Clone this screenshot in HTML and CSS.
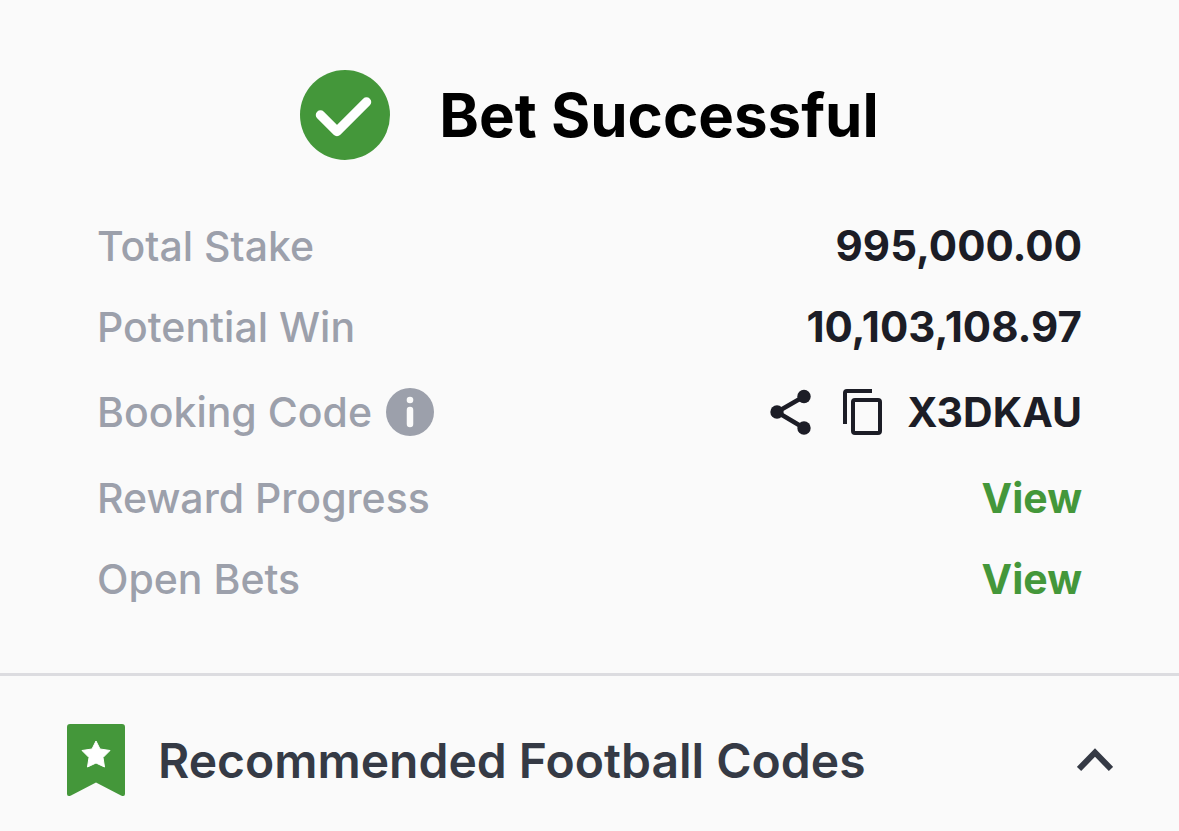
FILE: index.html
```html
<!DOCTYPE html>
<html lang="en">

<head>
    <meta charset="UTF-8">
    <meta name="viewport" content="width=device-width, initial-scale=1.0">
    <title>Bet Successful</title>
    <link rel="stylesheet" href="styles.css">
</head>

<body>
    <main class="receipt">
        <!-- Status -->
        <div class="status">
            <svg class="status-icon" viewBox="0 0 90 90" aria-hidden="true">
                <circle cx="45" cy="45" r="45" fill="#44973a" />
                <path d="M20.500 45L37 61.500L66.500 32" fill="none" stroke="#fff" stroke-width="9.500" stroke-linecap="round" stroke-linejoin="round" />
            </svg>
            <h1>Bet Successful</h1>
        </div>

        <!-- Bet details -->
        <dl class="details">
            <div class="row">
                <dt>Total Stake</dt>
                <dd class="amount">995,000.00</dd>
            </div>
            <div class="row">
                <dt>Potential Win</dt>
                <dd class="amount">10,103,108.97</dd>
            </div>
            <div class="row row-code">
                <dt>
                    Booking Code
                    <button class="icon-button" type="button" aria-label="About booking codes">
                        <svg width="48" height="48" viewBox="0 0 48 48">
                            <circle cx="24" cy="24" r="24" fill="#9ca0ab" />
                            <circle cx="24" cy="12" r="3.300" fill="#fafafa" />
                            <path d="M24 22V36" stroke="#fafafa" stroke-width="6.500" stroke-linecap="round" />
                        </svg>
                    </button>
                </dt>
                <dd>
                    <button class="icon-button share" type="button" aria-label="Share">
                        <svg width="42" height="46" viewBox="0 0 42 46">
                            <path d="M35 7.500L8 23L35 39" fill="none" stroke="#1c1d26" stroke-width="4.500" />
                            <g fill="#1c1d26">
                                <circle cx="35" cy="7.500" r="6.700" />
                                <circle cx="8" cy="23" r="6.700" />
                                <circle cx="35" cy="39" r="6.700" />
                            </g>
                        </svg>
                    </button>
                    <button class="icon-button copy" type="button" aria-label="Copy">
                        <svg width="42" height="48" viewBox="0 0 42 48">
                            <path d="M4 36V5Q4 3 6 3H31M14 12H37Q39 12 39 14V43Q39 45 37 45H14Q12 45 12 43V14Q12 12 14 12Z" fill="none" stroke="#1c1d26" stroke-width="4" />
                        </svg>
                    </button>
                    X3DKAU
                </dd>
            </div>
            <div class="row">
                <dt>Reward Progress</dt>
                <dd><a href="#rewards">View</a></dd>
            </div>
            <div class="row">
                <dt>Open Bets</dt>
                <dd><a href="#open-bets">View</a></dd>
            </div>
        </dl>
    </main>

    <!-- Recommended codes -->
    <section class="recommended">
        <svg class="bookmark" viewBox="0 0 58 72" aria-hidden="true">
            <path d="M3 0H55Q58 0 58 3V70Q58 73 54 71.500L29 58.500L4 71.500Q0 73 0 70V3Q0 0 3 0Z" fill="#44973a" />
            <path d="M29 17L33 25L43 26.500L36 33.500L37.500 43L29 39L20.500 43L22 33.500L15 26.500L25 25Z" fill="#fff" stroke="#fff" stroke-linejoin="round" />
        </svg>
        <h2>Recommended Football Codes</h2>
        <button class="icon-button" type="button" aria-label="Collapse">
            <svg width="36" height="24" viewBox="0 0 36 24">
                <path d="M2 21L18 4.500L34 21" fill="none" stroke="#353a45" stroke-width="6" />
            </svg>
        </button>
    </section>
</body>

</html>
```
FILE: styles.css
```css
* {
    box-sizing: border-box;
}

body {
    margin: 0;
    background-color: #fafafa;
    color: #1c1d26;
    font-family: Inter, "Liberation Sans", sans-serif;
}

.receipt {
    padding: 70px 97px 54px;
    border-bottom: 3px solid #dcdce0;
}

.status {
    display: flex;
    justify-content: center;
    align-items: center;
    gap: 49px;
}

.status-icon {
    width: 90px;
    height: 90px;
}

h1 {
    margin: 0;
    color: #000;
    font-size: 60px;
    font-weight: 700;
    line-height: 90px;
}

.details {
    margin: 45px 0 0;
}

.row {
    display: flex;
    justify-content: space-between;
    align-items: center;
    height: 81px;
    font-size: 41px;
}

.row-code {
    height: 90px;
}

dt,
dd {
    display: flex;
    align-items: center;
    margin: 0;
}

dt {
    gap: 14px;
    color: #9ca0ab;
    font-weight: 500;
}

dd {
    font-weight: 700;
}

.amount {
    font-size: 42px;
}

a {
    color: #44973a;
    text-decoration: none;
}

.icon-button {
    display: flex;
    padding: 0;
    border: none;
    background: none;
    cursor: pointer;
}

.share {
    margin-right: 30px;
}

.copy {
    margin-right: 24px;
}

.recommended {
    display: flex;
    align-items: center;
    padding: 48px 66px 35px 67px;
}

.bookmark {
    width: 58px;
    height: 72px;
}

h2 {
    flex: 1;
    margin: 0 0 0 33px;
    color: #353a45;
    font-size: 48px;
    font-weight: 600;
}
```
